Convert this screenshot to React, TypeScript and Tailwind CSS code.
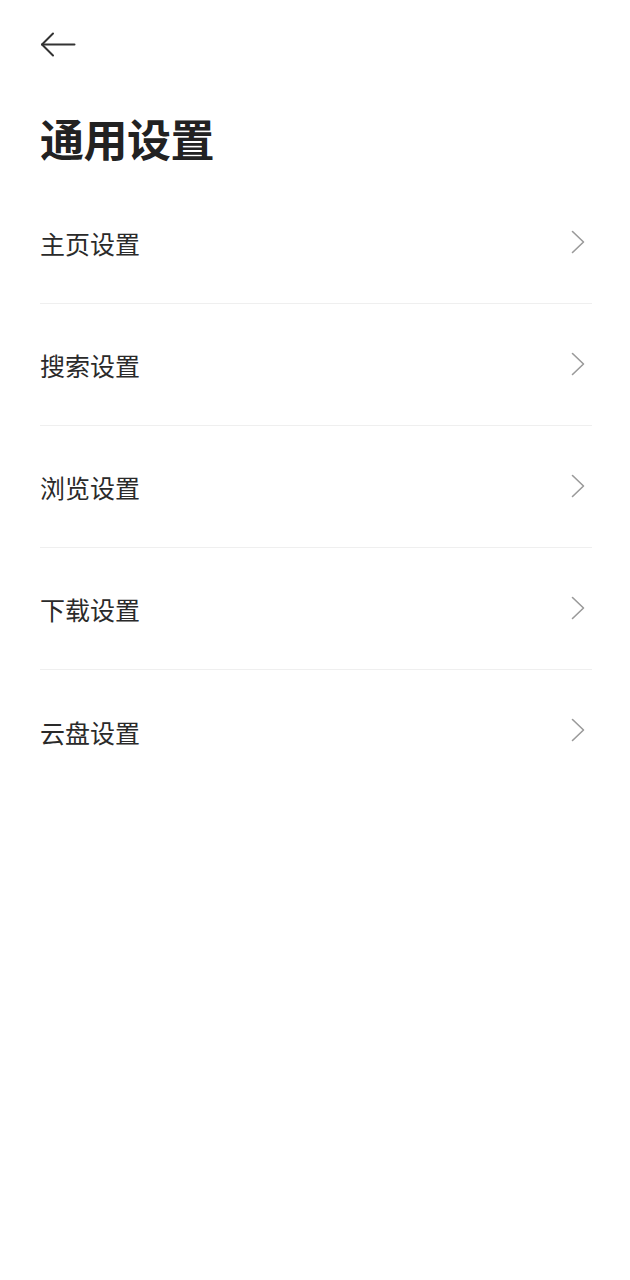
const items = ["主页设置", "搜索设置", "浏览设置", "下载设置", "云盘设置"];

function ChevronRight() {
  return (
    <svg width="16" height="24" viewBox="0 0 16 24" fill="none" className="shrink-0">
      <path d="M2.5 1.5 L13.5 12 L2.5 22.5" stroke="#9a9a9a" strokeWidth="1.6" strokeLinecap="round" strokeLinejoin="round" />
    </svg>
  );
}

export default function App() {
  return (
    <main
      className="min-h-screen w-full bg-white text-[#222]"
      style={{ fontFamily: '"Noto Sans", "Noto Sans CJK SC", sans-serif' }}
    >
      <div className="pl-10 pr-[38px] pt-[32px]">
        <button className="flex h-[26px] w-[38px] items-center" aria-label="返回">
          <svg width="36" height="26" viewBox="0 0 36 26" fill="none">
            <path d="M2 12.5 H34.5" stroke="#333" strokeWidth="2" strokeLinecap="round" />
            <path d="M13 1.5 L2 12.5 L13 23.5" stroke="#333" strokeWidth="2" strokeLinecap="round" strokeLinejoin="round" />
          </svg>
        </button>

        <h1 className="mt-[56px] text-[44px] font-bold leading-[52px] tracking-[-0.5px] text-[#222]">通用设置</h1>

        <ul className="mt-[16px]">
          {items.map((label, index) => (
            <li
              key={label}
              className={`flex h-[122px] items-center justify-between ${
                index < items.length - 1 ? "border-b border-[#efefef]" : ""
              }`}
            >
              <span className="pt-[4px] text-[25px] leading-none text-[#2a2a2a]">{label}</span>
              <span className="mr-[6px] mb-[2px]">
                <ChevronRight />
              </span>
            </li>
          ))}
        </ul>
      </div>
    </main>
  );
}
